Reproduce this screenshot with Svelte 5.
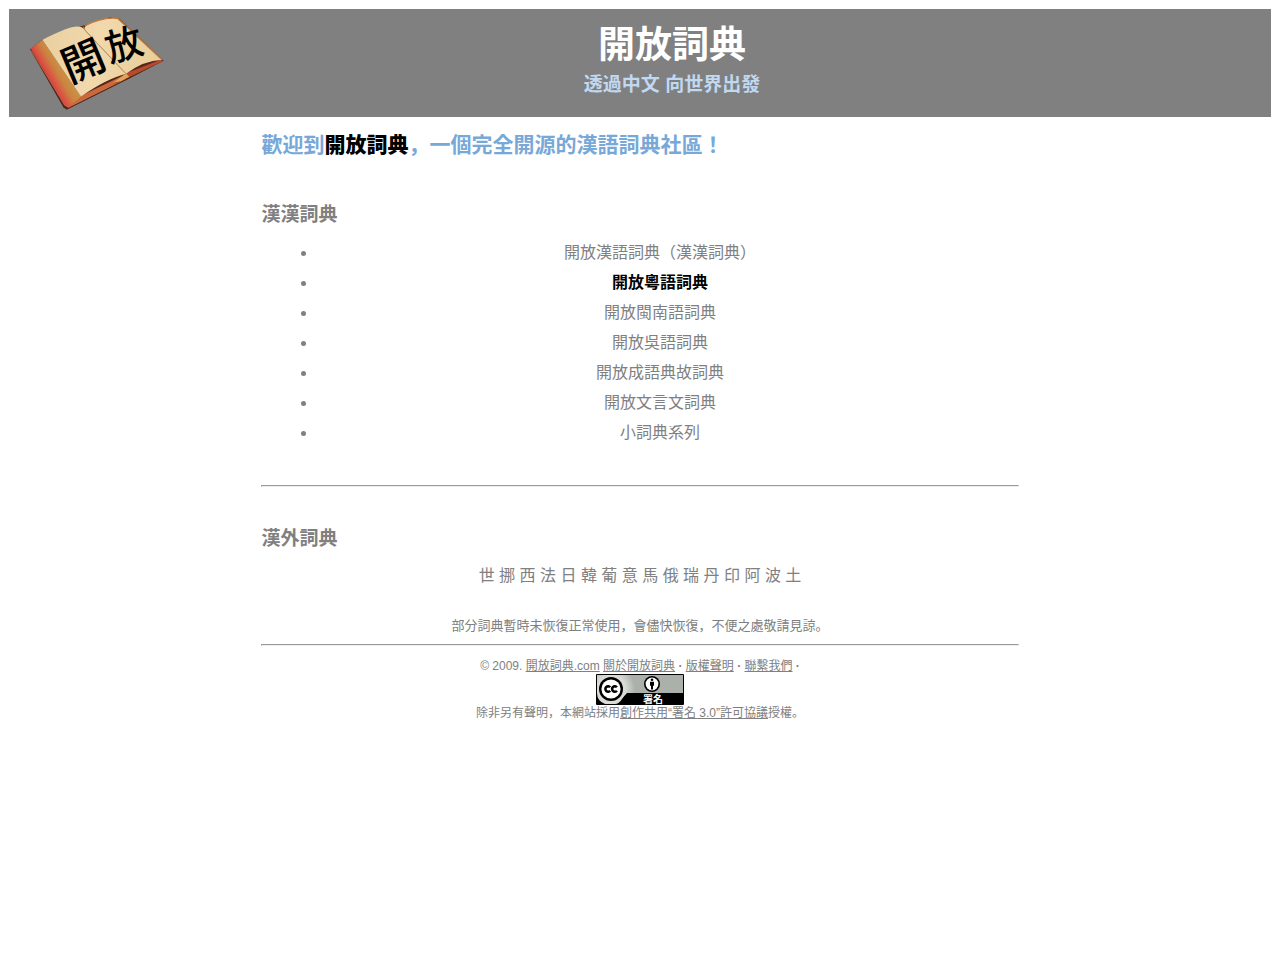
<script lang="ts">
	const chinese: { name: string; active?: boolean }[] = [
		{ name: '開放漢語詞典（漢漢詞典）' },
		{ name: '開放粵語詞典', active: true },
		{ name: '開放閩南語詞典' },
		{ name: '開放吳語詞典' },
		{ name: '開放成語典故詞典' },
		{ name: '開放文言文詞典' },
		{ name: '小詞典系列' },
	];
	const foreign = '世 挪 西 法 日 韓 葡 意 馬 俄 瑞 丹 印 阿 波 土';
</script>

<svelte:head>
	<title>開放詞典</title>
</svelte:head>

<div class="page">
	<header>
		<svg class="logo" viewBox="84 45 411 285" role="img" aria-label="開放">
			<defs>
				<linearGradient id="cover" x1="125" y1="225" x2="185" y2="190" gradientUnits="userSpaceOnUse">
					<stop offset="0" stop-color="#b8302a" />
					<stop offset="0.3" stop-color="#dc5044" />
					<stop offset="0.65" stop-color="#cc8440" />
					<stop offset="1" stop-color="#c8934a" />
				</linearGradient>
				<linearGradient id="paper" x1="130" y1="120" x2="480" y2="200" gradientUnits="userSpaceOnUse">
					<stop offset="0" stop-color="#ead0a0" />
					<stop offset="0.45" stop-color="#f1d9ad" />
					<stop offset="1" stop-color="#e9cc98" />
				</linearGradient>
			</defs>
			<path d="M90 146 L126 118 L248 76 L330 50 L358 54 L491 181 L390 233 L200 328 L190 320 Z" fill="#54251a" />
			<path d="M92 144 L127 118 L244 289 L376 224 L378 234 L205 321 L194 315 Z" fill="url(#cover)" />
			<path d="M94 150 L194 314 L206 320 L378 234" fill="none" stroke="#d8704c" stroke-width="2" />
			<path d="M207 317 Q238 296 243 286 L376 222 L382 229 L330 258 Z" fill="#c9683a" />
			<path d="M374 220 L485 176 L488 182 L390 229 L340 252 Z" fill="#b54a2d" />
			<path d="M340 246 L378 219 L388 229 L362 242 Z" fill="#dfa65a" />
			<path d="M127 118 Q205 78 232 78 Q247 78 254 87 L378 220 Q322 234 243 288 Z" fill="url(#paper)" />
			<path d="M254 87 Q250 73 282 63 Q335 46 352 54 L486 178 Q432 180 378 220 Z" fill="url(#paper)" />
			<path d="M254 76 Q310 48 354 54 L486 178" fill="none" stroke="#bd7b3c" stroke-width="4" />
			<path d="M250 78 Q254 92 270 106 L378 220" fill="none" stroke="#b99359" stroke-width="3" />
			<text x="246" y="173" font-size="128" transform="rotate(-23 246 173)">開</text>
			<text x="370" y="125" font-size="112" transform="rotate(-16 370 125)">放</text>
		</svg>
		<div class="titles">
			<h1>開放詞典</h1>
			<p>透過中文 向世界出發</p>
		</div>
	</header>

	<main>
		<h2>歡迎到<strong>開放詞典</strong>，一個完全開源的漢語詞典社區！</h2>

		<h3>漢漢詞典</h3>
		<ul>
			{#each chinese as dict}
				<li><span class:active={dict.active}>{dict.name}</span></li>
			{/each}
		</ul>

		<hr />

		<h3>漢外詞典</h3>
		<p class="foreign">{foreign}</p>
		<p class="notice">部分詞典暫時未恢復正常使用，會儘快恢復，不便之處敬請見諒。</p>
	</main>

	<footer>
		<hr />
		<p>
			© 2009. <a href="/">開放詞典.com</a> <a href="/about">關於開放詞典</a> <b>·</b>
			<a href="/copyright">版權聲明</a> <b>·</b> <a href="/contact">聯繫我們</a> <b>·</b>
		</p>
		<a class="badge" href="/license" aria-label="署名">
			<svg viewBox="0 0 88 31" width="88" height="31">
				<defs>
					<radialGradient id="shine" cx="15" cy="15" r="24" gradientUnits="userSpaceOnUse">
						<stop offset="0.6" stop-color="#d8dbd6" />
						<stop offset="1" stop-color="#abb1aa" />
					</radialGradient>
				</defs>
				<rect width="88" height="31" rx="1" />
				<path d="M1 1h86v18H31q-2 2-5 6-3 5-7 5H9Q1 27 1 19Z" fill="url(#shine)" />
				<circle cx="15" cy="15" r="12" fill="#000" />
				<circle cx="15" cy="15" r="9.6" fill="#fff" />
				<g fill="none" stroke="#000" stroke-width="2.5">
					<path d="M14.2 13.3A2.7 2.7 0 1 0 14.2 16.7" />
					<path d="M20.9 13.3A2.7 2.7 0 1 0 20.9 16.7" />
				</g>
				<circle cx="56" cy="10" r="8" fill="#000" />
				<circle cx="56" cy="10" r="6.4" fill="#fff" />
				<circle cx="56" cy="5.8" r="1.3" />
				<path d="M54 7.8h4v4h-1v3.8h-2v-3.8h-1z" />
				<text x="57" y="28.5" font-size="10">署名</text>
			</svg>
		</a>
		<p>除非另有聲明，本網站採用<a href="/license">創作共用“署名 3.0”許可協議</a>授權。</p>
	</footer>
</div>

<style>
	:global(body) {
		background: #fff;
	}

	.page {
		padding: 9px;
		font-family: 'Liberation Sans', 'Noto Sans CJK JP', sans-serif;
		font-size: 16px;
		color: #808080;
	}

	h1, h2, h3, p, ul {
		margin: 0;
	}

	/* header */

	header {
		display: flex;
		align-items: flex-start;
		padding: 6px 92px 6px 19px;
		background: #808080;
	}

	.logo {
		flex: none;
		width: 137px;
		height: 96px;
		overflow: visible;
	}

	.logo text {
		font-family: 'Noto Sans CJK JP', sans-serif;
		font-weight: 500;
		fill: #000;
		text-anchor: middle;
		dominant-baseline: central;
	}

	.titles {
		flex: 1;
		padding-top: 2px;
		text-align: center;
		font-weight: bold;
	}

	h1 {
		font-size: 37px;
		line-height: 58px;
		color: #fff;
	}

	.titles p {
		font-size: 19px;
		line-height: 20px;
		color: #c0d8f0;
	}

	/* content */

	main, footer {
		width: 60%;
		margin: 0 auto;
	}

	h2 {
		padding: 12px 0 39px;
		font-size: 21px;
		line-height: 32px;
		color: #78a8d8;
	}

	h2 strong {
		color: #000;
	}

	h3 {
		font-size: 19px;
		line-height: 30px;
	}

	ul {
		padding: 8px 0 37px 56px;
	}

	li {
		padding-right: 16px;
		line-height: 30px;
		text-align: center;
	}

	.active {
		font-weight: bold;
		color: #000;
	}

	hr {
		margin: 0;
		border: 1px inset #eee;
	}

	main hr {
		margin-bottom: 37px;
	}

	.foreign {
		padding: 7px 0 20px;
		line-height: 30px;
		text-align: center;
	}

	.notice {
		padding-bottom: 3px;
		font-size: 13px;
		line-height: 30px;
		text-align: center;
	}

	/* footer */

	footer {
		font-size: 12px;
		line-height: 16px;
		text-align: center;
	}

	footer hr {
		margin-bottom: 12px;
	}

	footer a {
		color: inherit;
	}

	.badge {
		display: block;
		width: 88px;
		margin: 0 auto;
	}

	.badge svg {
		display: block;
	}

	.badge text {
		font-family: 'Noto Sans CJK JP', sans-serif;
		font-weight: bold;
		fill: #fff;
		text-anchor: middle;
	}
</style>
